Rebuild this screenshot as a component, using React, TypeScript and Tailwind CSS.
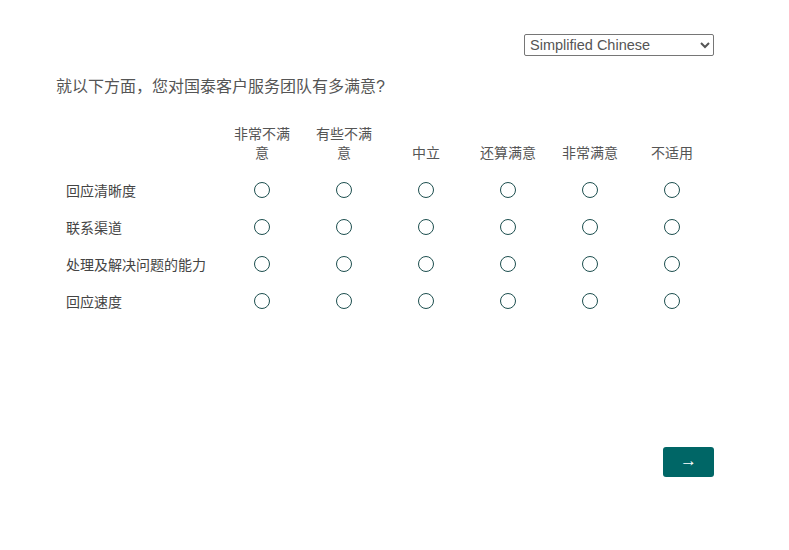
import React from "react";

const cols = ["非常不满意", "有些不满意", "中立", "还算满意", "非常满意", "不适用"];
const rows = ["回应清晰度", "联系渠道", "处理及解决问题的能力", "回应速度"];

export default function App() {
  return (
    <div
      className="w-[789px] h-[550px] bg-white px-[56px] pt-[34px] text-[#555]"
      style={{ fontFamily: '"Liberation Sans", "Noto Sans CJK SC", sans-serif' }}
    >
      <div className="flex justify-end w-[658px]">
        <select
          className="w-[190px] h-[22px] border border-[#767676] rounded-[2px] text-[14.5px] text-[#555] pl-[1px] pr-[4px] bg-white"
          style={{ fontFamily: '"Liberation Sans", sans-serif' }}
          defaultValue="zh"
        >
          <option value="zh">Simplified Chinese</option>
        </select>
      </div>
      <div className="mt-[19px] text-[16px] leading-[24px] text-[#555]">
        就以下方面，您对国泰客户服务团队有多满意?
      </div>
      <div className="mt-[26px] grid grid-cols-[165px_repeat(6,82px)]">
        <div />
        {cols.map((c) => (
          <div
            key={c}
            className="flex items-end justify-center text-center px-[9px] pb-[8px] text-[14px] leading-[19px] text-[#555]"
          >
            {c}
          </div>
        ))}
        {rows.map((r) => (
          <React.Fragment key={r}>
            <div className="h-[37px] flex items-center px-[10px] pt-[3px] text-[14px] text-[#444]">
              {r}
            </div>
            {cols.map((c) => (
              <div key={c} className="h-[37px] flex items-center justify-center">
                <span className="block w-[16px] h-[16px] rounded-full border border-[#1d4f4f] bg-white" />
              </div>
            ))}
          </React.Fragment>
        ))}
      </div>
      <div className="flex justify-end w-[658px] mt-[128px]">
        <button className="w-[51px] h-[30px] rounded-[3px] bg-[#006666] text-white text-[17px] leading-none flex items-center justify-center pb-[3px]">
          →
        </button>
      </div>
    </div>
  );
}
